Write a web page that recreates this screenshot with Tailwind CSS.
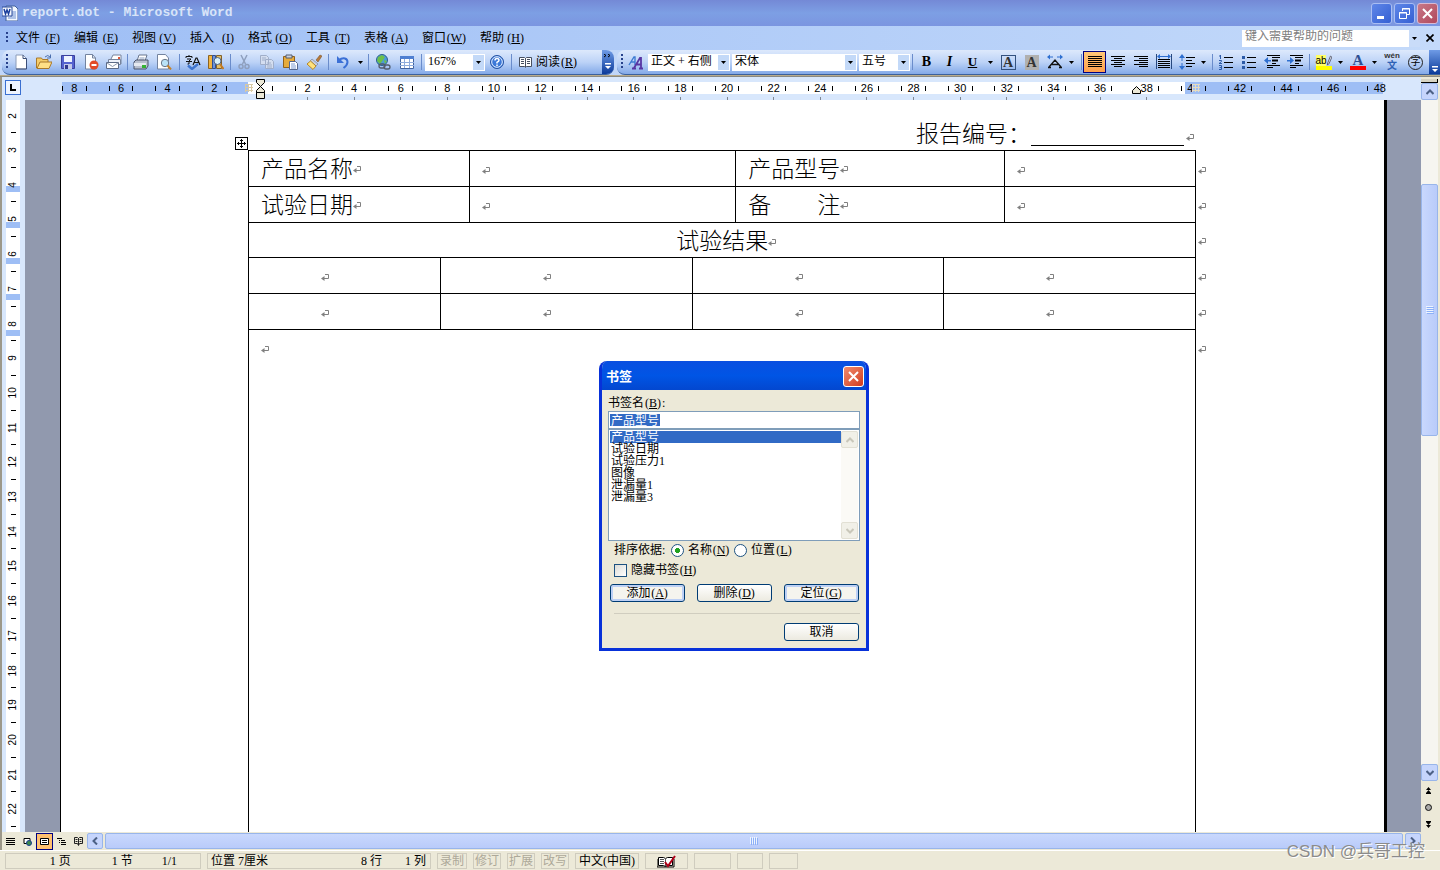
<!DOCTYPE html>
<html lang="zh-CN">
<head>
<meta charset="utf-8">
<title>report.dot - Microsoft Word</title>
<script src="https://cdn.jsdelivr.net/npm/@tailwindcss/browser@4"></script>
</head>
<body class="relative flex h-screen flex-col overflow-hidden bg-[#ece9d8] font-['Liberation_Serif','Noto_Sans_CJK_SC',serif] text-[12px] leading-4 text-black">

<!-- Title bar -->
<header class="flex h-[26px] shrink-0 items-center gap-1 bg-linear-to-b from-[#7489d6] via-[#7d9fe4] to-[#7b95e0] pl-0.5 pr-0.5">
  <svg class="h-4 w-4" viewBox="0 0 16 16"><path d="M4 1h9l3 3v12H4z" fill="#f4f8ff" stroke="#41619c"/><path d="M8 7h6M8 9h6M8 11h6M6 13h8" stroke="#6d8fd0"/><path d="M0 2h10v9H0z" fill="#f6f9ff" stroke="#2a4b9a"/><path d="M2 4l1.500 5L5 5l1.500 4L8 4" fill="none" stroke="#1b3f9c" stroke-width="1.500"/></svg>
  <h1 class="flex-1 font-['Liberation_Mono',monospace] text-[13px] font-bold text-[#d8e4f8]">report.dot - Microsoft Word</h1>
  <div class="flex gap-0.5">
    <button aria-label="最小化" class="flex h-[21px] w-[21px] items-center justify-center rounded-[3px] border border-[#a9bdf3] bg-linear-to-br from-[#5f86e8] to-[#3560d3]"><svg class="h-[13px] w-[13px]" viewBox="0 0 13 13"><path d="M2 9h7v3H2z" fill="#fff"/></svg></button>
    <button aria-label="还原" class="flex h-[21px] w-[21px] items-center justify-center rounded-[3px] border border-[#a9bdf3] bg-linear-to-br from-[#5f86e8] to-[#3560d3]"><svg class="h-[13px] w-[13px]" viewBox="0 0 13 13" fill="none" stroke="#fff"><path d="M4.500 4V1.500h7v6H9M4 2h8"/><path d="M1.500 5.500h7v6h-7zM1 6h8"/></svg></button>
    <button aria-label="关闭" class="flex h-[21px] w-[21px] items-center justify-center rounded-[3px] border border-[#d9b9d3] bg-linear-to-br from-[#c87888] to-[#b0485c]"><svg class="h-[13px] w-[13px]" viewBox="0 0 13 13"><path d="M2 2l9 9M11 2l-9 9" stroke="#fff" stroke-width="2"/></svg></button>
  </div>
</header>

<!-- Menu bar -->
<nav class="flex h-6 shrink-0 items-center bg-linear-to-r from-[#9ebef5] to-[#c4dafa] pl-1.5">
  <svg class="h-3 w-[3px]" viewBox="0 0 3 12"><path d="M0 0h2v2H0zM0 4h2v2H0zM0 8h2v2H0z" fill="#27418b"/></svg>
  <div class="flex flex-1">
    <button class="flex w-[58px] justify-center whitespace-nowrap">文件<span class="w-[20px] text-right">(<u>F</u>)</span></button>
    <button class="flex w-[58px] justify-center whitespace-nowrap">编辑<span class="w-[20px] text-right">(<u>E</u>)</span></button>
    <button class="flex w-[58px] justify-center whitespace-nowrap">视图<span class="w-[20px] text-right">(<u>V</u>)</span></button>
    <button class="flex w-[58px] justify-center whitespace-nowrap">插入<span class="w-[20px] text-right">(<u>I</u>)</span></button>
    <button class="flex w-[58px] justify-center whitespace-nowrap">格式<span class="w-[20px] text-right">(<u>O</u>)</span></button>
    <button class="flex w-[58px] justify-center whitespace-nowrap">工具<span class="w-[20px] text-right">(<u>T</u>)</span></button>
    <button class="flex w-[58px] justify-center whitespace-nowrap">表格<span class="w-[20px] text-right">(<u>A</u>)</span></button>
    <button class="flex w-[58px] justify-center whitespace-nowrap">窗口<span class="w-[20px] text-right">(<u>W</u>)</span></button>
    <button class="flex w-[58px] justify-center whitespace-nowrap">帮助<span class="w-[20px] text-right">(<u>H</u>)</span></button>
  </div>
  <div class="flex h-[17px] w-[178px] bg-white">
    <input aria-label="键入需要帮助的问题" placeholder="键入需要帮助的问题" class="min-w-0 flex-1 pb-1 pl-[3px] text-[12px] leading-3 placeholder:text-[#808080]">
    <button aria-label="展开" class="flex w-[11px] items-center justify-center bg-[#c9dcf9]"><svg class="h-[3px] w-[5px]" viewBox="0 0 5 3"><path d="M0 0h5L2.500 3z"/></svg></button>
  </div>
  <button aria-label="关闭文档" class="flex w-5 justify-center"><svg class="h-2 w-2" viewBox="0 0 8 8"><path d="M0.500 0.500l7 7M7.500 0.500l-7 7" stroke="#000" stroke-width="1.700"/></svg></button>
</nav>

<!-- Toolbars -->
<div class="flex h-[25px] shrink-0 gap-[3px] bg-[#c0d6f9] pl-0.5">
  <div class="flex w-[612px] items-center overflow-hidden rounded-lg border-b border-[#3b619c] bg-linear-to-b from-[#dde9fc] via-[#bdd3f7] to-[#83a9e8] pl-1">
    <svg class="h-4 w-[3px]" viewBox="0 0 3 16"><path d="M0 0h2v2H0zM0 4h2v2H0zM0 8h2v2H0zM0 12h2v2H0z" fill="#27418b"/></svg>
    <button aria-label="新建" class="flex w-[23px] justify-center"><svg class="h-4 w-4" viewBox="0 0 16 16"><path d="M3 1h7l3.500 3.500V15H3z" fill="#fff" stroke="#8c9cb8"/><path d="M10 1v3.500h3.500V15H3" fill="none" stroke="#3c4f78"/></svg></button>
    <button aria-label="打开" class="flex w-6 justify-center"><svg class="h-4 w-4" viewBox="0 0 16 16"><path d="M0.500 14V4h5l1 1.500H12V8" fill="#f5cd6b" stroke="#a9782a"/><path d="M1 14.500L4 8h12l-3 6.500z" fill="#ffdf86" stroke="#a9782a"/><path d="M9 3q3-3 5 0M14.500 0.500V4H11" fill="none" stroke="#4b6fae"/></svg></button>
    <button aria-label="保存" class="flex w-[23px] justify-center"><svg class="h-4 w-4" viewBox="0 0 16 16"><path d="M1.500 1.500h13v13h-13z" fill="#5563cf" stroke="#3a3f9d"/><path d="M4 2h8v6H4z" fill="#eef3ff"/><path d="M4 10h8v5H4z" fill="#c4cae8"/><path d="M5 11h3v4H5z" fill="#31388d"/></svg></button>
    <button aria-label="权限" class="flex w-[23px] justify-center"><svg class="h-4 w-4" viewBox="0 0 16 16"><path d="M2.500 0.500h7L12.500 4v11h-10z" fill="#fff" stroke="#73839f"/><path d="M9.500 0.500V4h3" fill="none" stroke="#73839f"/><circle cx="11" cy="11" r="4.500" fill="#e24a28"/><path d="M8.500 10h5v2h-5z" fill="#fff"/></svg></button>
    <button aria-label="电子邮件" class="flex w-[23px] justify-center"><svg class="h-4 w-4" viewBox="0 0 16 16"><path d="M5 5l2-4h8v9" fill="#fff" stroke="#76839c"/><path d="M2.500 5.500h12v5h-12z" fill="#eef2fa" stroke="#76839c"/><path d="M0.500 8.500h12v6h-12z" fill="#fff" stroke="#5c6b86"/><path d="M1 9l5.500 3.500L12 9" fill="none" stroke="#8b98ae"/><path d="M12 3h2v2h-2z" fill="#e0573a"/></svg></button>
    <i class="mr-px ml-0.5 h-4 w-px bg-[#6a8ccb]"></i>
    <button aria-label="打印" class="flex w-[23px] justify-center"><svg class="h-4 w-4" viewBox="0 0 16 16"><path d="M4 7l2-6h8l-2 6" fill="#fff" stroke="#68768f"/><path d="M6.500 4h5M6 6h5" stroke="#8fa1c0"/><path d="M1 8l2-2h12v6l-2 3H1z" fill="#b8bfce" stroke="#4a556c"/><path d="M1 9h12v3H1z" fill="#e4e8ef"/><path d="M9 11h4v3H9z" fill="#34b233"/></svg></button>
    <button aria-label="打印预览" class="flex w-6 justify-center"><svg class="h-4 w-4" viewBox="0 0 16 16"><path d="M1.500 0.500h8L12.500 4v11h-11z" fill="#fff" stroke="#73839f"/><circle cx="9" cy="9" r="3.700" fill="#b9e2f6" stroke="#6a7688"/><path d="M11.500 11.500l3.500 4" stroke="#c68329" stroke-width="2"/></svg></button>
    <i class="mr-px ml-[3px] h-4 w-px bg-[#6a8ccb]"></i>
    <button aria-label="拼写和语法" class="flex w-[23px] justify-center"><svg class="h-4 w-4" viewBox="0 0 16 16" fill="none"><path d="M1 4V2.500h6V4M4 1v1.500M2 5h4L4 7v3H2.500M1 7.500h6" stroke="#111"/><path d="M8 11l3-7h1l3 7M9 8.500h5" stroke="#111" stroke-width="1.200"/><path d="M3 11.500l4 3.500 6-5" stroke="#3f75cf" stroke-width="2.400"/></svg></button>
    <button aria-label="信息检索" class="flex w-6 justify-center"><svg class="h-4 w-4" viewBox="0 0 16 16"><path d="M0.500 1.500h4v13h-4z" fill="#f1b441" stroke="#8d6420"/><path d="M4.500 1.500h3v13h-3z" fill="#6e94db" stroke="#2f4f92"/><path d="M8.500 1.500h5v13h-5z" fill="#e3c06b" stroke="#80602a"/><circle cx="9.500" cy="7" r="3.500" fill="#d7f0fb" stroke="#4d6486"/><path d="M12 10l3.500 5" stroke="#c47a22" stroke-width="2"/></svg></button>
    <i class="mr-px ml-0.5 h-4 w-px bg-[#6a8ccb]"></i>
    <button aria-label="剪切" class="flex w-[23px] justify-center"><svg class="h-4 w-4" viewBox="0 0 16 16" fill="none" stroke="#8e9fbd" stroke-width="1.500"><path d="M5 1l4.500 9M11 1L6.500 10"/><circle cx="5" cy="12.500" r="2"/><circle cx="11" cy="12.500" r="2"/></svg></button>
    <button aria-label="复制" class="flex w-[23px] justify-center"><svg class="h-4 w-4" viewBox="0 0 16 16" fill="#d4def0" stroke="#a0aec9"><path d="M1.500 1.500h6l2 2v7h-8zM6.500 5.500h6l2 2v7h-8z"/><path d="M3 4h4M3 6h3M8 9h4M8 11h5M8 13h5"/></svg></button>
    <button aria-label="粘贴" class="flex w-6 justify-center"><svg class="h-4 w-4" viewBox="0 0 16 16"><path d="M1.500 2.500h11v11h-11z" fill="#e6ab3c" stroke="#91611b"/><path d="M4 1h6v3H4z" fill="#ccd1da" stroke="#525d70"/><path d="M7.500 7.500h6l2 2v6h-8z" fill="#fff" stroke="#54678e"/><path d="M9 10h4M9 12h5M9 14h5" stroke="#7d9cd4"/></svg></button>
    <button aria-label="格式刷" class="flex w-6 justify-center"><svg class="h-4 w-4" viewBox="0 0 16 16"><path d="M10 6l4-5 2 1-4 6z" fill="#b7793a" stroke="#6f4a22" stroke-width=".5"/><path d="M6 5l6 5-2 2-6-5z" fill="#c7cedd" stroke="#7d889f" stroke-width=".7"/><path d="M4.500 7l5.500 5-3 3.500L1 10z" fill="#ffe27b" stroke="#b2862c"/></svg></button>
    <i class="mx-0.5 h-4 w-px bg-[#6a8ccb]"></i>
    <button aria-label="撤消" class="flex w-[23px] justify-center"><svg class="h-4 w-4" viewBox="0 0 16 16"><path d="M3.500 6.500c5-4 9-2 9 1.500 0 3-2 4.500-4 6" fill="none" stroke="#3b70d6" stroke-width="2"/><path d="M2 2v7h7z" fill="#3b70d6"/></svg></button>
    <button aria-label="撤消列表" class="flex w-3 justify-center"><svg class="h-[3px] w-[5px]" viewBox="0 0 5 3"><path d="M0 0h5L2.500 3z"/></svg></button>
    <i class="mx-0.5 h-4 w-px bg-[#6a8ccb]"></i>
    <button aria-label="超链接" class="flex w-6 justify-center"><svg class="h-4 w-4" viewBox="0 0 16 16"><circle cx="7" cy="6" r="5.500" fill="#4c9bd8" stroke="#2b5e8f"/><path d="M3 3l4-2 3 2-2 3-3 4-3-3zM9 6l3 1-2 3z" fill="#6cc04a"/><rect x="4" y="10" width="6" height="4" rx="2" fill="none" stroke="#525c6e" stroke-width="1.300"/><rect x="9" y="11" width="6" height="4" rx="2" fill="none" stroke="#525c6e" stroke-width="1.300"/></svg></button>
    <button aria-label="插入表格" class="flex w-[23px] justify-center"><svg class="h-4 w-4" viewBox="0 0 16 16"><path d="M1.500 2.500h13v12h-13z" fill="#fff" stroke="#41639f"/><path d="M1 2h14v3H1z" fill="#4f7fd1"/><path d="M1 8.500h14M1 11.500h14M5.500 5v9M10.500 5v9" stroke="#8facdc"/></svg></button>
    <i class="mx-[3px] h-4 w-px bg-[#6a8ccb]"></i>
    <div class="flex h-[17px] w-[60px] border border-white bg-white">
      <select aria-label="显示比例" class="min-w-0 flex-1 appearance-none pb-1 pl-0.5 leading-3"><option>167%</option></select>
      <span class="flex w-[11px] items-center justify-center bg-[#c3d9f8]"><svg class="h-[3px] w-[5px]" viewBox="0 0 5 3"><path d="M0 0h5L2.500 3z"/></svg></span>
    </div>
    <button aria-label="帮助" class="flex w-[23px] justify-center"><svg class="h-4 w-4" viewBox="0 0 16 16"><circle cx="8" cy="8" r="6.500" fill="#3b78d8" stroke="#2553a4"/><circle cx="8" cy="8" r="5.300" fill="none" stroke="#e6f0ff"/><path d="M6 6.500q0-2 2-2t2 1.800q0 1-2 2v1.200M8 10.500v1.500" fill="none" stroke="#fff" stroke-width="1.500"/></svg></button>
    <i class="mx-[3px] h-4 w-px bg-[#6a8ccb]"></i>
    <button class="ml-1 flex items-center gap-1 whitespace-nowrap"><svg class="h-4 w-[13px]" viewBox="0 0 13 16"><path d="M0.500 3.500h5l1 1 1-1h5v9h-5l-1 1-1-1h-5z" fill="#fff" stroke="#474f60"/><path d="M6.500 4v9M2 5.500h3M2 7.500h3M2 9.500h3M8 5.500h3M8 7.500h3M8 9.500h3" stroke="#474f60"/></svg><span class="flex text-[12px]">阅读<span class="w-[18px] text-center">(<u>R</u>)</span></span></button>
    <button aria-label="工具栏选项" class="ml-auto flex h-full w-3 flex-col items-center justify-end gap-1 bg-linear-to-b from-[#6f9be6] to-[#0b3a9a] pb-1"><svg class="h-4 w-2" viewBox="0 0 8 16"><path d="M0 0l2 1.500L0 3M4 0l2 1.500L4 3" fill="none" stroke="#000"/><path d="M1 9h6v1.500H1zM1 12h6l-3 3z" fill="#fff"/></svg></button>
  </div>

  <div class="flex min-w-0 flex-1 items-center overflow-hidden rounded-l-lg border-b border-[#3b619c] bg-linear-to-b from-[#dde9fc] via-[#bdd3f7] to-[#83a9e8] pl-1">
    <svg class="h-4 w-[3px]" viewBox="0 0 3 16"><path d="M0 0h2v2H0zM0 4h2v2H0zM0 8h2v2H0zM0 12h2v2H0z" fill="#27418b"/></svg>
    <button aria-label="格式窗格" class="flex w-6 justify-center"><svg class="h-4 w-4" viewBox="0 0 16 16" fill="none"><path d="M1 11l5-8h1v8M3 8h4" stroke="#3e7bd2" stroke-width="1.400"/><path d="M6 14l6-10h1v10M8 10.500h5M4 14.500h4M11 14.500h4" stroke="#5836a3" stroke-width="1.800"/></svg></button>
    <div class="flex h-[17px] w-[82px] border border-white bg-white">
      <select aria-label="样式" class="min-w-0 flex-1 appearance-none overflow-hidden pb-1 pl-0.5 leading-3"><option>正文 + 右侧</option></select>
      <span class="flex w-[11px] shrink-0 items-center justify-center bg-[#c3d9f8]"><svg class="h-[3px] w-[5px]" viewBox="0 0 5 3"><path d="M0 0h5L2.500 3z"/></svg></span>
    </div>
    <div class="ml-0.5 flex h-[17px] w-[125px] border border-white bg-white">
      <select aria-label="字体" class="min-w-0 flex-1 appearance-none pb-1 pl-0.5 leading-3"><option>宋体</option></select>
      <span class="flex w-[11px] items-center justify-center bg-[#c3d9f8]"><svg class="h-[3px] w-[5px]" viewBox="0 0 5 3"><path d="M0 0h5L2.500 3z"/></svg></span>
    </div>
    <div class="ml-0.5 flex h-[17px] w-[51px] border border-white bg-white">
      <select aria-label="字号" class="min-w-0 flex-1 appearance-none pb-1 pl-0.5 leading-3"><option>五号</option></select>
      <span class="flex w-[11px] items-center justify-center bg-[#c3d9f8]"><svg class="h-[3px] w-[5px]" viewBox="0 0 5 3"><path d="M0 0h5L2.500 3z"/></svg></span>
    </div>
    <i class="mx-0.5 h-4 w-px bg-[#6a8ccb]"></i>
    <button aria-label="加粗" class="w-[23px] text-[14px] font-black">B</button>
    <button aria-label="倾斜" class="w-[23px] text-[14px] font-bold italic">I</button>
    <button aria-label="下划线" class="w-[23px] text-[13px] font-bold underline">U</button>
    <button aria-label="下划线列表" class="flex w-3 justify-center"><svg class="h-[3px] w-[5px]" viewBox="0 0 5 3"><path d="M0 0h5L2.500 3z"/></svg></button>
    <button aria-label="字符边框" class="flex w-6 justify-center"><span class="h-[15px] w-[15px] border border-[#33527f] text-[14px] leading-[13px] font-bold text-[#333]">A</span></button>
    <button aria-label="字符底纹" class="flex w-[23px] justify-center"><span class="h-[15px] w-[14px] bg-[#b0b0b0] text-[14px] leading-[15px] font-bold text-[#333]">A</span></button>
    <button aria-label="字符缩放" class="flex w-6 justify-center"><svg class="h-4 w-4" viewBox="0 0 16 16"><path d="M2 13l6-7 6 7M4.500 10.500h7M1 13.500h3M12 13.500h3" fill="none" stroke="#111" stroke-width="1.300"/><path d="M0 3l3-2.500v5zM3 2.500h3v1H3zM16 3l-3-2.500v5zM10 2.500h3v1h-3z" fill="#2e6fd0"/></svg></button>
    <button aria-label="缩放列表" class="flex w-2 justify-center"><svg class="h-[3px] w-[5px]" viewBox="0 0 5 3"><path d="M0 0h5L2.500 3z"/></svg></button>
    <i class="mr-px ml-[6px] h-4 w-px bg-[#6a8ccb]"></i>
    <button aria-label="两端对齐" class="flex h-[22px] w-[23px] items-center justify-center border border-[#000080] bg-linear-to-b from-[#ffc777] to-[#ff9f4c]"><svg class="h-4 w-4" viewBox="0 0 16 16"><path d="M1 2.500h14M1 4.500h14M1 6.500h14M1 8.500h14M1 10.500h14M1 12.500h14" stroke="#000"/></svg></button>
    <button aria-label="居中" class="flex w-[23px] justify-center"><svg class="h-4 w-4" viewBox="0 0 16 16"><path d="M1 2.500h14M4 4.500h8M1 6.500h14M4 8.500h8M1 10.500h14M4 12.500h8" stroke="#000"/></svg></button>
    <button aria-label="右对齐" class="flex w-[23px] justify-center"><svg class="h-4 w-4" viewBox="0 0 16 16"><path d="M1 2.500h14M6 4.500h9M1 6.500h14M6 8.500h9M1 10.500h14M6 12.500h9" stroke="#000"/></svg></button>
    <button aria-label="分散对齐" class="flex w-[23px] justify-center"><svg class="h-4 w-4" viewBox="0 0 16 16"><path d="M2 5.500h12M2 7.500h12M2 9.500h12M2 11.500h12M2 13.500h12" stroke="#000"/><path d="M.5 0v15M15.500 0v15" stroke="#27487f"/><path d="M1 2.500L4 0v5zM15 2.500L12 0v5zM4 2h8v1H4z" fill="#2e6fd0"/></svg></button>
    <button aria-label="行距" class="flex w-6 justify-center"><svg class="h-4 w-4" viewBox="0 0 16 16"><path d="M7 3.500h9M7 6.500h6M7 9.500h9M7 12.500h6" stroke="#000"/><path d="M3 0l3 4H0zM3 16l3-4H0zM2.500 4h1v3h-1zM2.500 9h1v3h-1z" fill="#2e6fd0"/></svg></button>
    <button aria-label="行距列表" class="flex w-2 justify-center"><svg class="h-[3px] w-[5px]" viewBox="0 0 5 3"><path d="M0 0h5L2.500 3z"/></svg></button>
    <i class="mr-px ml-[5px] h-4 w-px bg-[#6a8ccb]"></i>
    <button aria-label="编号" class="flex w-[23px] justify-center"><svg class="h-4 w-4" viewBox="0 0 16 16"><path d="M6 3.500h9M6 8.500h9M6 13.500h9" stroke="#000"/><path d="M2.500 1v4M1 2h1.500M1 6.500h2.500v1L1 9.500h3M1 11.500h2.500v4H1M1.500 13.500h2" fill="none" stroke="#2c5ba8"/></svg></button>
    <button aria-label="项目符号" class="flex w-[23px] justify-center"><svg class="h-4 w-4" viewBox="0 0 16 16"><path d="M6 3.500h9M6 8.500h9M6 13.500h9" stroke="#000"/><path d="M1 2h3v3H1zM1 7h3v3H1zM1 12h3v3H1z" fill="#2c5ba8"/></svg></button>
    <button aria-label="减少缩进量" class="flex w-[23px] justify-center"><svg class="h-4 w-4" viewBox="0 0 16 16"><path d="M3 1.500h13M8 3.500h8M8 9.500h4M3 11.500h13M3 13.500h6" stroke="#000"/><path d="M8 6.500h6" stroke="#000" stroke-width="2"/><path d="M0 6.500L4 3v7zM4 6h3v1.500H4z" fill="#2e6fd0"/></svg></button>
    <button aria-label="增加缩进量" class="flex w-[23px] justify-center"><svg class="h-4 w-4" viewBox="0 0 16 16"><path d="M3 1.500h13M8 3.500h8M8 9.500h4M3 11.500h13M3 13.500h6" stroke="#000"/><path d="M8 6.500h6" stroke="#000" stroke-width="2"/><path d="M7 6.500L3 3v7zM0 6h3v1.500H0z" fill="#2e6fd0"/></svg></button>
    <i class="mr-0.5 ml-[3px] h-4 w-px bg-[#6a8ccb]"></i>
    <button aria-label="突出显示" class="flex w-[23px] flex-col items-center"><span class="flex h-[11px] w-4 items-center bg-linear-to-r from-[#ffff66] from-60% to-transparent to-60% font-['Liberation_Sans',sans-serif] text-[10px] leading-[11px]">ab<svg class="h-[11px] w-[5px]" viewBox="0 0 5 11"><path d="M0 10l3.500-9L5 2 2 9z" fill="#dfe6f2" stroke="#445" stroke-width=".8"/></svg></span><span class="h-1 w-4 bg-[#ffff00]"></span></button>
    <button aria-label="突出显示列表" class="flex w-[11px] justify-center"><svg class="h-[3px] w-[5px]" viewBox="0 0 5 3"><path d="M0 0h5L2.500 3z"/></svg></button>
    <button aria-label="字体颜色" class="flex w-6 flex-col items-center"><span class="h-[12px] text-[15px] leading-[12px] font-bold text-[#2f4f92]">A</span><span class="h-1 w-4 bg-[#ff0000]"></span></button>
    <button aria-label="字体颜色列表" class="flex w-2 justify-center"><svg class="h-[3px] w-[5px]" viewBox="0 0 5 3"><path d="M0 0h5L2.500 3z"/></svg></button>
    <button aria-label="拼音指南" class="flex w-7 flex-col items-center font-['Liberation_Sans','Noto_Sans_CJK_SC',sans-serif] font-bold"><span class="h-2 text-[8px] leading-2 text-[#333]">wén</span><span class="h-3 text-[10px] leading-3 text-[#2f62b5]">文</span></button>
    <button aria-label="带圈字符" class="ml-0.5 flex h-[15px] w-[15px] items-center justify-center rounded-full border border-[#222] text-[10px] leading-[10px]">字</button>
    <button aria-label="工具栏选项" class="ml-auto flex h-full w-[11px] items-end justify-center bg-linear-to-b from-[#6f9be6] to-[#0b3a9a] pb-0.5"><svg class="h-[6px] w-[6px]" viewBox="0 0 6 6"><path d="M0 0h6v1.500H0zM0 3h6L3 6z" fill="#fff"/></svg></button>
  </div>
</div>
<div class="h-0.5 shrink-0 border-b border-[#8a8a82] bg-[#b8ab8c]"></div>

<!-- Workspace -->
<div class="flex min-h-0 flex-1">
  <main class="flex min-w-0 flex-1 flex-col border-l-2 border-[#9c988a]">
    <!-- Horizontal ruler -->
    <div class="relative flex h-[23px] shrink-0 bg-[#d8e7fc] pt-[5px]">
      <button aria-label="制表符" class="-mt-0.5 ml-[3px] flex h-[15px] w-4 shrink-0 items-center justify-center border border-[#3a6fd0] bg-[#eef4ff]"><svg class="h-2 w-2" viewBox="0 0 8 8"><path d="M1 0h2v5h4v2H1z"/></svg></button>
      <div class="ml-7 grid flex-1">
        <div class="flex h-3 pr-[38px] pl-[13px] [grid-area:1/1]">
          <div class="w-[186px] bg-[#9ebef5]"></div><div class="flex-1 bg-white"></div><div class="w-[198px] bg-[#9ebef5]"></div>
        </div>
        <div id="hruler" class="mr-[18px] ml-0.5 flex h-[18px] font-['Liberation_Sans',sans-serif] text-[11px] leading-3 [grid-area:1/1]"></div>
      </div>
      <svg class="absolute top-[7px] left-[243px] h-2 w-2" viewBox="0 0 8 8"><path d="M0 .5h8M0 3.500h8M0 6.500h8M.5 0v8M3.500 0v8M6.500 0v8" stroke="#d8c9a4"/></svg>
      <svg class="absolute top-0.5 left-[253px] h-[21px] w-[11px]" viewBox="0 0 11 21"><path d="M1.500.5h8v3l-4 4-4-4zM1.500 13.500v-2l4-4 4 4v2zM1.500 13.500h8v6h-8z" fill="#ece9d8" stroke="#000"/></svg>
      <svg class="absolute top-2 right-[280px] h-[9px] w-[9px]" viewBox="0 0 9 9"><path d="M.5 8.500v-3l4-4 4 4v3z" fill="#ece9d8" stroke="#000"/></svg>
      <svg class="absolute top-[7px] right-[221px] h-2 w-2 bg-[#9ebef5]" viewBox="0 0 8 8"><path d="M0 .5h8M0 3.500h8M0 6.500h8M.5 0v8M3.500 0v8M6.500 0v8" stroke="#e6dcc0"/></svg>
    </div>

    <div class="flex min-h-0 flex-1 bg-[#9199ae]">
      <!-- Vertical ruler -->
      <div class="w-[23px] shrink-0 bg-[#d8e7fc] pr-[5px] pl-1">
        <div class="relative flex h-full flex-col bg-white font-['Liberation_Sans',sans-serif] text-[10px] leading-3">
          <div class="absolute inset-x-0 top-[86px] flex flex-col gap-[30px]">
            <i class="h-1.5 bg-[#9ebef5]"></i><i class="h-1.5 bg-[#9ebef5]"></i><i class="h-1.5 bg-[#9ebef5]"></i><i class="h-1.5 bg-[#9ebef5]"></i><i class="h-1.5 bg-[#9ebef5]"></i>
          </div>
          <div id="vruler" class="relative flex h-full flex-col pb-[5px]"></div>
        </div>
      </div>

      <!-- Page -->
      <article class="mr-[34px] ml-[35px] flex min-w-0 flex-1 flex-col overflow-hidden border-r-[3px] border-l border-black bg-white pt-5 pl-[174px] font-['Noto_Sans_CJK_SC',sans-serif] text-[23px] leading-[28px] font-light">
        <div class="flex h-[30px] shrink-0 items-end">
          <button aria-label="移动表格" class="flex h-[13px] w-[13px] items-center justify-center border border-black bg-white"><svg class="h-[9px] w-[9px]" viewBox="0 0 9 9"><path d="M4.500 0v9M0 4.500h9M3 1.500h3M3 7.500h3M1.500 3v3M7.500 3v3" stroke="#000"/></svg></button>
          <p class="mb-0.5 ml-auto h-[30px]">报告编号：</p>
          <span class="mb-1 w-[153px] border-b border-black"></span>
          <svg class="mr-[190px] mb-2 ml-0.5 h-2 w-2" viewBox="0 0 8 8"><use href="#ret"/></svg>
        </div>
        <table class="mr-[176px] ml-[13px] h-[720px] table-fixed border-collapse">
          <colgroup><col class="w-[192px]"><col class="w-[29px]"><col class="w-[223px]"><col class="w-[43px]"><col class="w-[208px]"><col class="w-[61px]"><col class="w-[191px]"><col class="w-3"></colgroup>
          <tbody>
            <tr class="h-9"><td colspan="2" class="border border-black pb-1 pl-3">产品名称<svg class="inline h-2 w-2" viewBox="0 0 8 8"><use href="#ret"/></svg></td><td colspan="2" class="border border-black pt-1 pl-3"><svg class="h-2 w-2" viewBox="0 0 8 8"><use href="#ret"/></svg></td><td colspan="2" class="border border-black pb-1 pl-3">产品型号<svg class="inline h-2 w-2" viewBox="0 0 8 8"><use href="#ret"/></svg></td><td class="border border-black pt-1 pl-3"><svg class="h-2 w-2" viewBox="0 0 8 8"><use href="#ret"/></svg></td><td class="pt-1 pl-0.5"><svg class="h-2 w-2" viewBox="0 0 8 8"><use href="#ret"/></svg></td></tr>
            <tr class="h-9"><td colspan="2" class="border border-black pb-1 pl-3">试验日期<svg class="inline h-2 w-2" viewBox="0 0 8 8"><use href="#ret"/></svg></td><td colspan="2" class="border border-black pt-1 pl-3"><svg class="h-2 w-2" viewBox="0 0 8 8"><use href="#ret"/></svg></td><td colspan="2" class="border border-black pb-1 pl-3">备　　注<svg class="inline h-2 w-2" viewBox="0 0 8 8"><use href="#ret"/></svg></td><td class="border border-black pt-1 pl-3"><svg class="h-2 w-2" viewBox="0 0 8 8"><use href="#ret"/></svg></td><td class="pt-1 pl-0.5"><svg class="h-2 w-2" viewBox="0 0 8 8"><use href="#ret"/></svg></td></tr>
            <tr class="h-[35px]"><td colspan="7" class="border border-black pb-0.5 pl-2 text-center">试验结果<svg class="inline h-2 w-2" viewBox="0 0 8 8"><use href="#ret"/></svg></td><td class="pt-1 pl-0.5"><svg class="h-2 w-2" viewBox="0 0 8 8"><use href="#ret"/></svg></td></tr>
            <tr class="h-9"><td class="border border-black pt-1"><svg class="ml-[72px] h-2 w-2" viewBox="0 0 8 8"><use href="#ret"/></svg></td><td colspan="2" class="border border-black pt-1"><svg class="ml-[102px] h-2 w-2" viewBox="0 0 8 8"><use href="#ret"/></svg></td><td colspan="2" class="border border-black pt-1"><svg class="ml-[102px] h-2 w-2" viewBox="0 0 8 8"><use href="#ret"/></svg></td><td colspan="2" class="border border-black pt-1"><svg class="ml-[102px] h-2 w-2" viewBox="0 0 8 8"><use href="#ret"/></svg></td><td class="pt-1 pl-0.5"><svg class="h-2 w-2" viewBox="0 0 8 8"><use href="#ret"/></svg></td></tr>
            <tr class="h-9"><td class="border border-black pt-1"><svg class="ml-[72px] h-2 w-2" viewBox="0 0 8 8"><use href="#ret"/></svg></td><td colspan="2" class="border border-black pt-1"><svg class="ml-[102px] h-2 w-2" viewBox="0 0 8 8"><use href="#ret"/></svg></td><td colspan="2" class="border border-black pt-1"><svg class="ml-[102px] h-2 w-2" viewBox="0 0 8 8"><use href="#ret"/></svg></td><td colspan="2" class="border border-black pt-1"><svg class="ml-[102px] h-2 w-2" viewBox="0 0 8 8"><use href="#ret"/></svg></td><td class="pt-1 pl-0.5"><svg class="h-2 w-2" viewBox="0 0 8 8"><use href="#ret"/></svg></td></tr>
            <tr><td colspan="7" class="border-x border-t border-black pt-4 pl-3 align-top"><svg class="h-2 w-2" viewBox="0 0 8 8"><use href="#ret"/></svg></td><td class="pt-4 pl-0.5 align-top"><svg class="h-2 w-2" viewBox="0 0 8 8"><use href="#ret"/></svg></td></tr>
          </tbody>
        </table>
      </article>
    </div>

    <!-- View buttons and horizontal scroll bar -->
    <div class="flex h-[18px] shrink-0 items-center bg-[#ece9d8]">
      <div class="flex w-[85px]">
        <button aria-label="普通视图" class="flex w-[17px] justify-center"><svg class="h-[9px] w-[9px]" viewBox="0 0 9 9"><path d="M0 1.500h9M0 3.500h9M0 5.500h9M0 7.500h9" stroke="#000"/></svg></button>
        <button aria-label="Web 版式视图" class="flex w-[17px] justify-center"><svg class="h-[9px] w-[9px]" viewBox="0 0 9 9"><path d="M1 1.500h6v5H1z" fill="#fff" stroke="#000"/><circle cx="6" cy="6" r="2.500" fill="#3c8a4d" stroke="#1b3b90"/></svg></button>
        <button aria-label="页面视图" class="-my-1 flex h-[17px] w-[17px] items-center justify-center border border-[#000080] bg-[#ffc06f]"><svg class="h-[9px] w-[9px]" viewBox="0 0 9 9"><path d="M.5 1.500h8v6h-8z" fill="#fff" stroke="#000"/><path d="M2 3.500h5M2 5.500h5" stroke="#000"/></svg></button>
        <button aria-label="大纲视图" class="flex w-[17px] justify-center"><svg class="h-[9px] w-[9px]" viewBox="0 0 9 9"><path d="M0 1.500h5M2 3.500h1M4 3.500h4M2 5.500h1M4 5.500h5M4 7.500h5" stroke="#000"/></svg></button>
        <button aria-label="阅读版式" class="flex w-4 justify-center"><svg class="h-[9px] w-[9px]" viewBox="0 0 9 9"><path d="M.5.500h3l1 1 1-1h3v6h-3l-1 2-1-2h-3zM4.500 1v7M1.500 2.500h2M1.500 4.500h2M5.500 2.500h2M5.500 4.500h2" fill="none" stroke="#222"/></svg></button>
      </div>
      <button aria-label="向左滚动" class="flex h-4 w-4 items-center justify-center rounded-[2px] border border-[#98b5ea] bg-[#c6d5fc]"><svg class="h-2 w-[6px]" viewBox="0 0 6 8"><path d="M5 0.500L1.500 4 5 7.500" fill="none" stroke="#4d6185" stroke-width="2"/></svg></button>
      <div class="mx-0.5 flex h-4 flex-1 items-center justify-center rounded-[2px] border border-[#98b5ea] bg-linear-to-b from-[#c9d8fd] to-[#b9cbfa]"><svg class="h-2 w-2" viewBox="0 0 8 8"><path d="M.5 0v7M2.500 0v7M4.500 0v7M6.500 0v7" stroke="#eef4fe"/><path d="M1.500 1v7M3.500 1v7M5.500 1v7M7.500 1v7" stroke="#8cb0f8"/></svg></div>
      <button aria-label="向右滚动" class="flex h-4 w-4 items-center justify-center rounded-[2px] border border-[#98b5ea] bg-[#c6d5fc]"><svg class="h-2 w-[6px]" viewBox="0 0 6 8"><path d="M1 0.500L4.500 4 1 7.500" fill="none" stroke="#4d6185" stroke-width="2"/></svg></button>
    </div>
  </main>

  <!-- Vertical scroll bar -->
  <aside class="flex w-[19px] shrink-0 flex-col pr-0.5">
    <div class="mt-0.5 h-1 border-r border-b border-black bg-[#d8d4c4]"></div>
    <button aria-label="向上滚动" class="flex h-[17px] items-center justify-center rounded-[2px] border border-[#98b5ea] bg-[#c6d5fc]"><svg class="h-[6px] w-2" viewBox="0 0 8 6"><path d="M0.500 5L4 1.500 7.500 5" fill="none" stroke="#4d6185" stroke-width="2"/></svg></button>
    <div class="flex flex-1 flex-col bg-[#f6f5f0] pt-[84px]">
      <div class="flex h-[252px] items-center justify-center rounded-[2px] border border-[#98b5ea] bg-linear-to-r from-[#c9d8fd] to-[#b9cbfa]"><svg class="h-2 w-2" viewBox="0 0 8 8"><path d="M0 .5h7M0 2.500h7M0 4.500h7M0 6.500h7" stroke="#eef4fe"/><path d="M1 1.500h7M1 3.500h7M1 5.500h7M1 7.500h7" stroke="#8cb0f8"/></svg></div>
    </div>
    <button aria-label="向下滚动" class="flex h-[17px] items-center justify-center rounded-[2px] border border-[#98b5ea] bg-[#c6d5fc]"><svg class="h-[6px] w-2" viewBox="0 0 8 6"><path d="M0.500 1L4 4.500 7.500 1" fill="none" stroke="#4d6185" stroke-width="2"/></svg></button>
    <div class="flex h-[69px] flex-col items-center gap-[10px] pt-1.5 pr-0.5">
      <button aria-label="前一页" class="flex h-[7px]"><svg class="h-[7px] w-[7px]" viewBox="0 0 7 7"><path d="M3.500 0L6 3H1zM3.500 3L6 6H1zM1 6h5v1H1z"/></svg></button>
      <button aria-label="选择浏览对象" class="flex h-[7px]"><svg class="h-[7px] w-[7px]" viewBox="0 0 7 7"><circle cx="3.500" cy="3.500" r="3" fill="#a9a9a9" stroke="#111"/></svg></button>
      <button aria-label="下一页" class="flex h-[7px]"><svg class="h-[7px] w-[7px]" viewBox="0 0 7 7"><path d="M1 0h5v1H1zM1 1h5L3.500 4zM1 4h5L3.500 7z"/></svg></button>
    </div>
  </aside>
</div>

<!-- Status bar -->
<footer class="flex h-5 shrink-0 gap-1.5 border-t border-white pt-0.5 pb-px pl-[5px] whitespace-nowrap">
  <div class="flex w-[196px] justify-end border border-[#cfccbe] pr-[23px] leading-[14px]"><span class="w-[62px]">1 页</span><span class="w-[50px]">1 节</span><span>1/1</span></div>
  <div class="flex w-[224px] border border-[#cfccbe] pr-1 pl-[3px] leading-[14px]"><span class="flex-1">位置 7厘米</span><span class="w-[44px]">8 行</span><span>1 列</span></div>
  <div class="w-[30px] border border-[#cfccbe] text-center leading-[14px] text-[#aca899]">录制</div>
  <div class="w-[28px] border border-[#cfccbe] text-center leading-[14px] text-[#aca899]">修订</div>
  <div class="w-[28px] border border-[#cfccbe] text-center leading-[14px] text-[#aca899]">扩展</div>
  <div class="w-[28px] border border-[#cfccbe] text-center leading-[14px] text-[#aca899]">改写</div>
  <div class="w-[64px] border border-[#cfccbe] text-center leading-[14px]">中文(中国)</div>
  <div class="flex w-[43px] items-center justify-center border border-[#cfccbe]"><svg class="h-[13px] w-[19px]" viewBox="0 0 19 13"><path d="M1.500 2.500h5l2 1 2-1h5v8h-5l-2 1-2-1h-5z" fill="#fff" stroke="#000"/><path d="M0 4v8h17V4" fill="none" stroke="#000"/><path d="M8.500 3v8M3 4.500h4M3 6.500h4M3 8.500h4" stroke="#555"/><path d="M8 7l3 4 7-10" fill="none" stroke="#b00018" stroke-width="2"/></svg></div>
  <div class="w-[37px] border border-[#cfccbe]"></div>
  <div class="w-[26px] border border-[#cfccbe]"></div>
  <div class="w-[29px] border border-[#cfccbe]"></div>
</footer>

<p class="absolute right-[15px] bottom-1 font-['Liberation_Sans','Noto_Sans_CJK_SC',sans-serif] text-[17px] leading-7 text-[#8b8b8b] [text-shadow:1px_1px_0_#fff]">CSDN @兵哥工控</p>

<!-- Bookmark dialog -->
<section role="dialog" aria-labelledby="dlg-title" class="absolute top-[361px] left-[599px] flex h-[290px] w-[270px] flex-col overflow-hidden rounded-t-lg border-x-[3px] border-b-[3px] border-[#0831d9] bg-[#ece9d8]">
  <div class="-mx-[3px] flex h-[29px] shrink-0 items-center justify-between bg-linear-to-b from-[#0a4fe0] via-[#0055e5] to-[#0347cf] pt-0.5 pr-[5px] pl-[7px]">
    <h2 id="dlg-title" class="text-[13px] font-bold text-white">书签</h2>
    <button aria-label="关闭对话框" class="flex h-[21px] w-[21px] items-center justify-center rounded-[3px] border border-white bg-linear-to-br from-[#f08a6c] to-[#d1381a]"><svg class="h-[13px] w-[13px]" viewBox="0 0 13 13"><path d="M2 2l9 9M11 2l-9 9" stroke="#fff" stroke-width="2"/></svg></button>
  </div>
  <div class="flex flex-col px-1.5 pt-[5px]">
    <label for="bm" class="flex h-4"><span>书签名</span><span class="w-[18px] text-center">(<u>B</u>)</span>:</label>
    <div class="flex h-[18px] border border-[#7f9db9] bg-white px-px py-0.5"><input id="bm" value="产品型号" class="h-3 w-[50px] bg-[#316ac5] pl-px leading-3 text-white"></div>
    <div class="flex h-[112px] border border-[#7f9db9] bg-white p-px">
      <ul role="listbox" aria-label="书签列表" class="flex-1 leading-3">
        <li role="option" aria-selected="true" class="h-3 bg-[#316ac5] pl-px text-white">产品型号</li>
        <li role="option" class="h-3 pl-px">试验日期</li>
        <li role="option" class="h-3 pl-px">试验压力1</li>
        <li role="option" class="h-3 pl-px">图像</li>
        <li role="option" class="h-3 pl-px">泄漏量1</li>
        <li role="option" class="h-3 pl-px">泄漏量3</li>
      </ul>
      <div class="flex w-[17px] flex-col justify-between bg-[#fbfaf6]">
        <button aria-label="列表向上" class="flex h-[17px] items-center justify-center rounded-[2px] border border-[#e2e0d4] bg-[#f1f0e8]"><svg class="h-[6px] w-2" viewBox="0 0 8 6"><path d="M0.500 5L4 1.500 7.500 5" fill="none" stroke="#c9c7ba" stroke-width="2"/></svg></button>
        <button aria-label="列表向下" class="flex h-[17px] items-center justify-center rounded-[2px] border border-[#e2e0d4] bg-[#f1f0e8]"><svg class="h-[6px] w-2" viewBox="0 0 8 6"><path d="M0.500 1L4 4.500 7.500 1" fill="none" stroke="#c9c7ba" stroke-width="2"/></svg></button>
      </div>
    </div>
    <fieldset class="mt-px flex h-4 items-center pl-1.5">
      <legend class="float-left w-[57px]">排序依据:</legend>
      <input type="radio" name="sort" id="s1" checked class="h-[13px] w-[13px] appearance-none rounded-full border border-[#1d5281] bg-white bg-radial from-[#21a121] from-30% to-white to-35%"><label for="s1" class="flex w-[50px] pl-1">名称<span class="w-[18px] text-center">(<u>N</u>)</span></label>
      <input type="radio" name="sort" id="s2" class="h-[13px] w-[13px] appearance-none rounded-full border border-[#1d5281] bg-white"><label for="s2" class="flex pl-1">位置<span class="w-[18px] text-center">(<u>L</u>)</span></label>
    </fieldset>
    <div class="mt-1 flex h-4 items-center pl-1.5"><input type="checkbox" id="hid" class="h-[13px] w-[13px] appearance-none border border-[#1d5281] bg-linear-to-br from-[#dcdcd7] to-white"><label for="hid" class="flex pl-1">隐藏书签<span class="w-[18px] text-center">(<u>H</u>)</span></label></div>
    <div class="mt-1.5 flex h-[18px] justify-between pr-px pl-0.5">
      <button class="flex w-[75px] items-center justify-center rounded-[3px] border border-[#003c74] bg-[#f5f4ee] pb-px shadow-[inset_0_0_0_2px_#bdd0f5]">添加<span class="w-[18px] text-center">(<u>A</u>)</span></button>
      <button class="flex w-[75px] items-center justify-center rounded-[3px] border border-[#003c74] bg-linear-to-b from-white to-[#eceae0] pb-px">删除<span class="w-[18px] text-center">(<u>D</u>)</span></button>
      <button class="flex w-[75px] items-center justify-center rounded-[3px] border border-[#003c74] bg-[#f5f4ee] pb-px shadow-[inset_0_0_0_2px_#bdd0f5]">定位<span class="w-[18px] text-center">(<u>G</u>)</span></button>
    </div>
    <hr class="mt-[11px] ml-1.5 border-t border-[#d0cdbf]">
    <button class="mt-[9px] mr-px h-[18px] w-[75px] self-end rounded-[3px] border border-[#003c74] bg-linear-to-b from-white to-[#eceae0] pb-px leading-[14px]">取消</button>
  </div>
</section>

<svg class="hidden"><defs><g id="ret"><path d="M4 .5h3.500v4H1.500" fill="none" stroke="#808080"/><path d="M0 4.500L3.500 2v5z" fill="#808080"/></g></defs></svg>

<script>
// Horizontal ruler: one cell per two units, tick marks half a unit from each label.
const h = document.getElementById('hruler');
for (let n = -8; n <= 48; n += 2) {
  const tick = '<i class="mt-1 h-[5px] w-px bg-black"></i>';
  const blank = '<i class="w-px"></i>';
  const right = n === 48 ? blank : tick;
  const left = n === 38 || n === 0 ? blank : tick;
  const label = n === 0 ? '' : Math.abs(n);
  const minor = n > 0 && n < 40 ? '<i class="mt-[3px] h-[3px] w-px bg-[#7f8794]"></i>' : '';
  h.insertAdjacentHTML('beforeend', '<div class="grid flex-1 basis-0 grid-cols-[1fr_1px_1fr]"><div class="flex justify-center">' + left + '</div><div class="flex flex-col items-center overflow-visible"><span class="h-3">' + label + '</span>' + minor + '</div><div class="flex justify-center">' + right + '</div></div>');
}
// Vertical ruler: one cell per unit, with a tick at the cell's lower edge.
const v = document.getElementById('vruler');
for (let n = 2; n <= 22; n++) {
  const size = n === 2 ? 'h-[33px] shrink-0' : 'min-h-0 flex-1 basis-0';
  v.insertAdjacentHTML('beforeend', '<div class="flex flex-col items-center ' + size + '"><span class="flex flex-1 -rotate-90 items-center">' + n + '</span><i class="h-px w-[5px] bg-black"></i></div>');
}
</script>
</body>
</html>
